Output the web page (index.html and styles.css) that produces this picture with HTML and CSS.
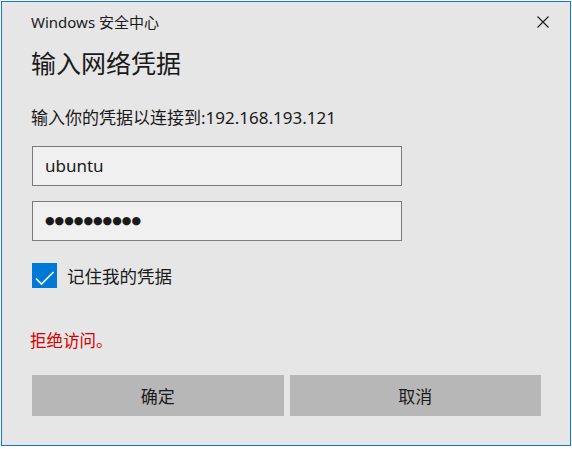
FILE: index.html
```html
<!DOCTYPE html>
<html lang="zh-CN">
<head>
    <meta charset="UTF-8">
    <title>Windows 安全中心</title>
    <link rel="stylesheet" href="styles.css">
</head>
<body>
    <div id="dialog">
        <div id="title-bar">
            <span id="title">Windows 安全中心</span>
            <svg id="close" width="12" height="12" viewBox="0 0 12 12">
                <path d="M0.5 0.5 L11.5 11.5 M11.5 0.5 L0.5 11.5" stroke="#1a1a1a" stroke-width="1.1" fill="none"/>
            </svg>
        </div>
        <div id="heading">输入网络凭据</div>
        <div id="prompt">输入你的凭据以连接到:192.168.193.121</div>
        <div class="field">ubuntu</div>
        <div class="field password">●●●●●●●●●●</div>
        <label id="remember">
            <span class="checkbox">
                <svg width="25" height="25" viewBox="0 0 25 25">
                    <path d="M4 15.5 L9.5 21 L21.5 9" stroke="#fff" stroke-width="1.6" fill="none"/>
                </svg>
            </span>
            <span>记住我的凭据</span>
        </label>
        <div id="error">拒绝访问。</div>
        <div id="buttons">
            <button>确定</button>
            <button>取消</button>
        </div>
    </div>
</body>
</html>
```

FILE: styles.css
```css
body {
    margin: 0;
    padding: 1px;
    background-color: #fff;
    font-family: "Noto Sans", "Noto Sans CJK SC", sans-serif;
    color: #1a1a1a;
}
#dialog {
    width: 509px;
    height: 443px;
    border: 1px solid #0f78e0;
    background-color: #e6e6e6;
    padding: 0 29px 0 30px;
    box-sizing: content-box;
    display: flex;
    flex-direction: column;
}
#title-bar {
    display: flex;
    justify-content: space-between;
    align-items: center;
    height: 20px;
    margin-top: 10px;
    margin-right: -8px;
}
#title {
    font-size: 15px;
    line-height: 20px;
    margin-left: -1px;
}
#heading {
    font-size: 25px;
    line-height: 30px;
    margin-top: 16px;
    margin-left: -1px;
}
#prompt {
    font-size: 17px;
    line-height: 24px;
    margin-top: 28px;
    margin-left: -1px;
}
.field {
    width: 356px;
    height: 38px;
    line-height: 38px;
    border: 1px solid #7a7a7a;
    background-color: #f0f0f0;
    padding-left: 12px;
    font-size: 17px;
    margin-top: 16px;
}
.password {
    margin-top: 15px;
    font-family: "DejaVu Sans", sans-serif;
    font-size: 11px;
}
#remember {
    display: flex;
    align-items: center;
    gap: 10px;
    margin-top: 22px;
    font-size: 17.5px;
}
.checkbox {
    width: 25px;
    height: 25px;
    background-color: #0078d7;
    display: block;
}
.checkbox svg {
    display: block;
}
#error {
    color: #d40000;
    font-size: 16.5px;
    line-height: 24px;
    margin-top: 41px;
    margin-left: -2px;
}
#buttons {
    display: flex;
    gap: 6px;
    margin-top: 22px;
}
button {
    flex: 1;
    height: 41px;
    border: none;
    background-color: #b7b7b7;
    font-family: "Noto Sans", "Noto Sans CJK SC", sans-serif;
    font-size: 17px;
    color: #1a1a1a;
    padding: 0;
}
```
